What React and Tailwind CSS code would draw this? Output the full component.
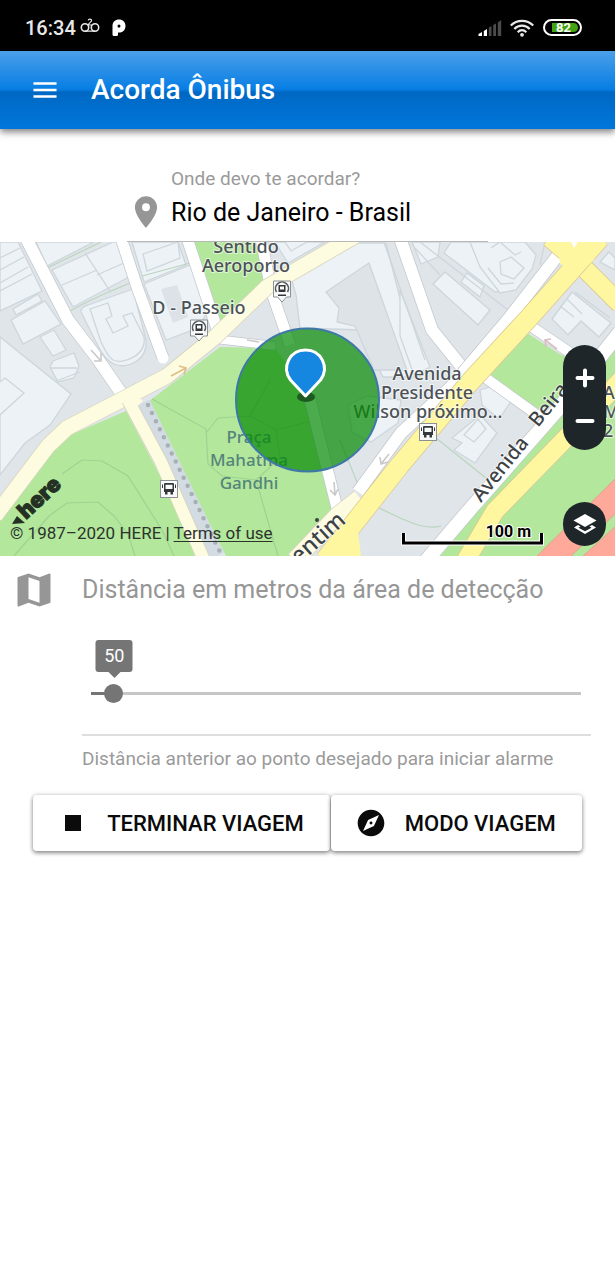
import { useState } from "react";
import { MdMenu, MdLocationOn, MdMap, MdStop, MdExplore } from "react-icons/md";

const MIN = 0;
const MAX = 1050;

function StatusBar() {
  return (
    <div className="flex h-[51px] items-center justify-between bg-black pl-[25px] pr-[33px] pt-1 text-[#e8e8e8]">
      <div className="flex items-center">
        <span className="text-[20px] font-medium leading-6">16:34</span>
        <svg className="ml-1 h-5 w-5" viewBox="0 0 20 20" fill="none" stroke="currentColor" strokeWidth="1.6">
          <circle cx="5" cy="9.500" r="3.700" />
          <circle cx="15" cy="9.500" r="3.700" />
          <path d="M5 13.200H15M8.200 2.400C8.400.6 11.600.6 11.600 2.500C11.600 4 8.800 4.800 8.300 7H12" strokeWidth="1.200" />
        </svg>
        <svg className="ml-3 h-[18px] w-[14px]" viewBox="0 0 14 18" fill="white">
          <path fillRule="evenodd" d="M.5 7C.5 3 3.200.6 7 .6S13.500 3.200 13.500 7 11 13.500 7.200 13.500H6V15.500Q6 17 4.500 17H2Q.5 17 .5 15.500ZM7 5.400A1.500 1.700 0 1 0 7 8.800A1.500 1.700 0 0 0 7 5.400Z" />
        </svg>
      </div>
      <div className="flex items-center">
        <svg className="h-[18px] w-6" viewBox="0 0 24 18">
          <path d="M.5 17V15L4 13V17ZM5.800 17V12L9 10V17Z" fill="#fff" />
          <path d="M10.800 17V8.500L13.500 7V17ZM15.200 17V6L18 4.500V17ZM19.800 17V3.500L23.200 1V17Z" fill="#4b4b4b" />
        </svg>
        <svg className="ml-2 h-[18px] w-6" viewBox="0 0 24 18" fill="none" stroke="currentColor" strokeWidth="2.200">
          <path d="M.8 6.500C7 .2 17 .2 23.200 6.500M4.300 10C8.500 5.600 15.500 5.600 19.700 10M7.700 13.200C10.200 10.500 13.800 10.500 16.300 13.200" />
          <circle cx="12" cy="15.800" r="1.900" fill="currentColor" stroke="none" />
        </svg>
        <span className="ml-[9px] flex h-[17px] w-[39px] rounded-full border-2 border-white p-[2px]">
          <span className="ml-[5px] flex w-[26px] items-center rounded-r-full bg-[#43a312] pl-1 text-[13px] font-bold leading-none text-white">
            82
          </span>
        </span>
      </div>
    </div>
  );
}

function Road({ d, width, fill = "#ffffff", edge = "#c3c8cc" }) {
  return (
    <>
      <path d={d} fill="none" stroke={edge} strokeWidth={width + 1.500} strokeLinejoin="round" />
      <path d={d} fill="none" stroke={fill} strokeWidth={width} strokeLinejoin="round" />
    </>
  );
}

function BusStop({ x, y }) {
  return (
    <g transform={`translate(${x} ${y})`}>
      <rect x="-8.500" y="-8.500" width="17" height="17" fill="#f8fafa" stroke="#8c9194" />
      <path fillRule="evenodd" fill="#33393b" d="M-4-6H4Q5-6 5-5V3H4V5.500H1.500V3H-1.500V5.500H-4V3H-5V-5Q-5-6-4-6ZM-3.500-4.200V0H3.500V-4.200ZM-7-4.500H-6V-1H-7ZM6-4.500H7V-1H6Z" />
    </g>
  );
}

function MetroStop({ x, y }) {
  return (
    <g transform={`translate(${x} ${y})`}>
      <path d="M-8.500-9H8.500V7H4.500L0 12L-4.500 7H-8.500Z" fill="#f8fafa" stroke="#8c9194" />
      <path d="M-5.500 2A6.500 6.500 0 1 1 5.500 2" fill="none" stroke="#555b5e" strokeWidth="1.600" />
      <path fillRule="evenodd" fill="#33393b" d="M-3.500-5H3.500V2H-3.500ZM-2-3.500V-.5H2V-3.500ZM-4 4.500H4V6H-4Z" />
    </g>
  );
}

function CityMap() {
  const block = { fill: "#ecf2f5", stroke: "#ced6dc", strokeWidth: 1.300 };
  const line = { fill: "none", stroke: "#ced6dc", strokeWidth: 1.300 };
  const path = { fill: "none", stroke: "#9ed292", strokeWidth: 1.200 };
  return (
    <svg className="h-full w-full" viewBox="0 242 615 314" preserveAspectRatio="xMidYMid slice">
      <rect y="242" width="615" height="314" fill="#e0e5ea" />

      <g {...block}>
        <path d="M0 242H18L42 291L0 311Z" />
        <path d="M0 258L20 248M0 270L24 257M0 283L28 267M0 291L32 274" />
        <path d="M11 320L45 301L61 324L23 344ZM13 309L38 294L42 301L16 315Z" />
        <path d="M40 337L54 330L66 350L53 356ZM53 361L74 353L79 366L74 378L58 382L50 367Z" />
        <path d="M51 368H77M56 381L80 372" />
        <path d="M0 337L71 394L50 425L25 443L0 475Z" />
        <path d="M-5 386L5 378L24 393L0 415" />
        <path d="M36 242H94L47 266ZM52 270L113 242H122L129 277L73 307Z" />
        <path d="M85 253L110 291M62 285L97 270M97 275L124 263" />
        <path d="M132 242H178L186 265L144 282Z" />
        <path d="M143 254L178 242L180 258L147 271Z" />
        <path d="M81 312C80 309 84 306 88 305L133 289L146 340C148 360 127 370 114 364C105 360 100 350 96 342Z" />
        <path d="M90 309L108 303L112 316L106 319L113 333L128 326L123 316L132 313L144 337C147 355 123 365 113 360C107 356 104 348 101 342Z" />
        <path d="M144 284L190 265L211 306L198 328L166 340Z" />
        <path d="M161 289L177 285L188 317L173 323Z" fill="#dce2e7" stroke="none" />
        <path d="M275 242H325L288 263L281 252Z" />
        <path d="M285 242L291 251L307 242" />
        <path d="M292 281L357 243H386L420 377H383L361 330L300 328L296 295Z" />
        <path d="M326 292L369 263L407 370H374L355 326L337 322L339 308Z" fill="#dee3e8" />
        <path d="M400 290L430 367L414 375L400 336Z" />
        <path d="M412 242H440L438 257L421 264Z" />
        <path d="M433 284L445 272L490 310L478 325ZM461 282L467 273L484 286L480 297Z" />
        <path d="M444 253L451 242H475L510 290L495 292Z" />
        <path d="M470 242L480 267L500 293L516 290L532 269L536 255L525 242Z" />
        <path d="M500 262L511 257L524 268L514 279L501 274ZM491 248L500 242L515 255L521 252M488 268L501 284L514 283" />
        <path d="M552 319L572 292L611 323L599 337L581 321L568 335Z" />
        <path d="M560 306L574 317M567 299L582 314M575 292L610 318" />
        <path d="M600 262L609 252L615 258V270Z" />
        <path d="M452 438L462 443L454 450L475 463L497 433L480 415Z" />
        <path d="M464 435L478 419L486 429L474 442ZM480 390L493 386L512 400L499 419L482 405Z" />
        <path d="M348 405L367 396L401 400L398 423L371 442L352 432Z" />
      </g>
      <g {...line}>
        <path d="M420 242L508 310M415 248L440 275M384 242L425 360M545 242L540 265" />
      </g>
      <g {...path} stroke="#bad5be">
        <path d="M45 269L101 242M70 311C100 294 115 290 132 282M142 276L190 263M377 507L400 518C412 523 427 530 441 526M431 434L486 478M340 440L359 487" />
      </g>

      <g fill="#b3e89c">
        <path d="M193 242H257L267 280L219 330Z" />
        <path d="M0 520L50 454L68 436L126 411L202 556H0Z" />
        <path d="M148 402L220 347L275 348L309 395L328 470L337 510L292 556H226Z" />
        <path d="M527 333L572 362L556 408L531 409L490 374Z" />
        <path d="M567 406L615 342V556H430L475 505Z" />
        <path d="M528 388L563 355L590 372L560 412Z" />
      </g>

      <g {...path}>
        <path d="M62 474L82 460L102 461L128 476L162 530L174 556M14 556L49 516L67 503L98 502L114 516L128 534L135 556" />
        <path d="M152 399L206 429L208 464L222 476L256 480L280 458L276 430L250 416L218 418L206 433M256 480L278 556M250 416L270 380M276 430L315 420" />
      </g>

      <path d="M143 403L217 556" fill="none" stroke="#d3dbe3" strokeWidth="15" />
      <path d="M148 405L224 560" fill="none" stroke="#a7b1b3" strokeWidth="4.500" strokeLinecap="round" strokeDasharray="0 9" />

      <Road d="M26 238L68 320L97 358L126 400" width={12} />
      <Road d="M121 238L137 287L163 358" width={11} />
      <circle cx="163" cy="358" r="5.500" fill="#fff" />
      <Road d="M187 238L218 332" width={11} />
      <Road d="M261 238L271 290L290 345" width={11} />
      <Road d="M215 339L275 346" width={8} />
      <Road d="M309 395L320 440L337 508" width={11} />
      <Road d="M400 238L432 330L465 371" width={12} />
      <Road d="M562 250L510 317L450 388L401 433L358 492" width={12} />
      <Road d="M529 325L575 356" width={10} />
      <Road d="M480 374L540 417" width={10} />
      <Road d="M620 332L560 407L472 507L425 562" width={14} />

      <Road d="M355 236L267 287L215 337L167 376L125 398L67 428L48 446L-5 516" width={15} fill="#fefce0" edge="#d5d3bd" />
      <Road d="M128 400L161 462L204 560" width={12} fill="#fefce0" edge="#d5d3bd" />
      <path d="M122 397L134 392L143 401L133 410Z" fill="#fefce0" />
      <Road d="M360 498L337 516L295 560" width={17} fill="#fefce0" edge="#d5d3bd" />
      <Road d="M640 360L568 436L495 511L466 560" width={18} fill="#fff7a0" edge="#dbc794" />
      <Road d="M550 238L580 264L620 304" width={18} fill="#fff7a0" edge="#dbc794" />
      <Road d="M600 238L527 320L470 382L400 465L325 560" width={19} fill="#fff7a0" edge="#dbc794" />
      <path d="M556 242H590L594 260L575 277L560 263Z" fill="#fff7a0" />
      <path d="M352 524L358 531L361 557H325Z" fill="#fff7a0" />
      <path d="M571 242H578L574 248Z" fill="#fff" />

      <g fill="#ffa99b" stroke="#dfa28e">
        <path d="M616 478L536 557H570L616 513Z" />
        <path d="M616 526L582 557H616Z" />
      </g>

      <g fill="none" stroke="#dfbd86" strokeWidth="1.600">
        <path d="M171 376L186 368M179 366L186 368L184 374" />
        <g stroke="#c9c9c9">
          <path d="M91 350L101 361M94 361H101V353M247 340L259 342M334 482L335 495M330 490L335 495L338 489M389 454L381 464M380 457L381 464L388 462" />
        </g>
        <path d="M557 349L545 340M546 347L545 340L551 339" stroke="#d7bfc3" />
      </g>

      <MetroStop x={282} y={290} />
      <MetroStop x={199} y={329} />
      <BusStop x={169} y={489} />
      <BusStop x={428} y={432} />

      <g
        fontFamily="'Noto Sans', sans-serif"
        fontSize="18"
        fontWeight="500"
        fill="#4c5256"
        stroke="#ffffff"
        strokeOpacity="0.6"
        strokeWidth="2"
        paintOrder="stroke"
        textAnchor="middle"
      >
        <text x="246" y="253">Sentido</text>
        <text x="246" y="272">Aeroporto</text>
        <text x="199" y="314">D - Passeio</text>
        <text x="427" y="380">Avenida</text>
        <text x="427" y="399">Presidente</text>
        <text x="428" y="418">Wilson próximo...</text>
        <g textAnchor="start">
          <text x="603" y="399">Av</text>
          <text x="603" y="418">M</text>
          <text x="603" y="437">2</text>
        </g>
        <g fill="#55847b" stroke="none" fontSize="17">
          <text x="249" y="443">Praça</text>
          <text x="249" y="466">Mahatma</text>
          <text x="249" y="489">Gandhi</text>
        </g>
        <g fill="#3d4245" textAnchor="start" fontSize="20">
          <text transform="translate(481 503) rotate(-51)">Avenida</text>
          <text transform="translate(538 428) rotate(-51)">Beira</text>
          <text transform="translate(299 565) rotate(-42)" fontSize="23">entim</text>
        </g>
        <circle cx="317" cy="520" r="2" fill="#3d4245" stroke="none" />
      </g>

      <circle cx="307.500" cy="400" r="71.500" fill="#078a07" fillOpacity="0.720" stroke="#3f78a8" strokeWidth="2" />
      <ellipse cx="306" cy="397" rx="9" ry="5" fill="#1c5a20" />
      <path d="M305.500 396L290.500 380C281 367 290 350 305.500 350S330 367 320.500 380Z" fill="#1587e0" stroke="#fff" strokeWidth="3" strokeLinejoin="round" />

      <path d="M17 516L25 523L12 524Z" fill="#253024" />
      <text
        transform="translate(26 520) rotate(-43)"
        fontFamily="Inter, sans-serif"
        fontSize="22"
        fontWeight="900"
        fill="#253024"
        stroke="#253024"
        strokeWidth="1"
      >
        here
      </text>

      <g fill="none">
        <path d="M403.500 533V543H541.500V533" stroke="#fff" strokeWidth="5" />
        <path d="M403.500 533V543H541.500V533" stroke="#000" strokeWidth="3" />
      </g>
      <text
        x="531"
        y="537"
        textAnchor="end"
        fontFamily="Roboto, sans-serif"
        fontSize="16"
        fontWeight="700"
        stroke="#fff"
        strokeWidth="2"
        paintOrder="stroke"
      >
        100 m
      </text>
    </svg>
  );
}

function MapPanel() {
  return (
    <section aria-label="Mapa" className="relative h-[314px] overflow-hidden">
      <CityMap />
      <p className="absolute bottom-[13px] left-[10px] text-[17px] leading-5 text-[#2c332c]">
        © 1987–2020 HERE |{" "}
        <a href="#terms" className="underline underline-offset-2">
          Terms of use
        </a>
      </p>
      <div className="absolute right-[9px] top-[103px] flex h-[105px] w-[43px] flex-col overflow-hidden rounded-full bg-[#1f262a] text-white">
        <button type="button" aria-label="Aumentar zoom" className="flex flex-1 items-center justify-center pt-3">
          <svg className="h-5 w-5" viewBox="0 0 20 20" stroke="currentColor" strokeWidth="4" strokeLinecap="round">
            <path d="M10 2.500V17.500M2.500 10H17.500" />
          </svg>
        </button>
        <button type="button" aria-label="Diminuir zoom" className="flex flex-1 items-center justify-center pb-2">
          <svg className="h-5 w-5" viewBox="0 0 20 20" stroke="currentColor" strokeWidth="4" strokeLinecap="round">
            <path d="M2.500 10H17.500" />
          </svg>
        </button>
      </div>
      <button
        type="button"
        aria-label="Camadas"
        className="absolute bottom-[10px] right-[9px] flex h-11 w-[43px] items-center justify-center rounded-full bg-[#1f262a] text-white"
      >
        <svg className="h-6 w-6" viewBox="0 0 24 24" fill="currentColor">
          <path d="M12 2L23.500 8.500L12 15L.5 8.500Z" />
          <path d="M5 13L1 15.500L12 22L23 15.500L19 13L16.500 14.500L18.500 15.700L12 19.200L5.500 15.700L7.500 14.500Z" />
        </svg>
      </button>
    </section>
  );
}

function DistanceSlider() {
  const [value, setValue] = useState(50);
  const percent = ((value - MIN) / (MAX - MIN)) * 100;
  return (
    <div className="relative ml-[9px] mr-[10px]">
      <output
        htmlFor="distance"
        className="absolute top-[3px] flex h-8 min-w-[37px] -translate-x-1/2 items-center justify-center rounded-[3px] bg-[#757575] px-2 text-[18px] leading-none text-white after:absolute after:top-full after:h-0 after:w-0 after:border-x-[6px] after:border-t-[6px] after:border-x-transparent after:border-t-[#757575]"
        style={{ left: `${percent}%` }}
      >
        {value}
      </output>
      <div className="pt-[46px]">
        <div
          className="flex h-5 items-center bg-[length:100%_3px] bg-center bg-no-repeat"
          style={{
            backgroundImage: `linear-gradient(to right, #757575 ${percent}%, #c6c6c6 ${percent}%)`,
          }}
        >
          <input
            id="distance"
            type="range"
            min={MIN}
            max={MAX}
            step="10"
            value={value}
            onChange={(e) => setValue(Number(e.target.value))}
            className="-mx-[10px] h-5 flex-1 cursor-pointer appearance-none bg-transparent outline-none [&::-webkit-slider-thumb]:h-[19px] [&::-webkit-slider-thumb]:w-[19px] [&::-webkit-slider-thumb]:appearance-none [&::-webkit-slider-thumb]:rounded-full [&::-webkit-slider-thumb]:bg-[#757575]"
          />
        </div>
      </div>
    </div>
  );
}

function ActionButton({ icon, children }) {
  return (
    <button
      type="button"
      className="flex h-14 items-center gap-[18px] whitespace-nowrap rounded-[4px] bg-white pl-6 pr-[26px] text-[22px] font-medium text-[#0b0b0b] shadow-[0_2px_4px_rgba(0,0,0,0.42),0_0_5px_rgba(0,0,0,0.16)]"
    >
      {icon}
      {children}
    </button>
  );
}

export default function App() {
  return (
    <div className="min-h-screen bg-white font-[Roboto,sans-serif] text-black">
      <StatusBar />
      <header className="relative flex h-[78px] items-center bg-linear-[to_bottom,#4b9fe9_0%,#077ee4_49%,#0068c3_53%,#0077dc_100%] pl-[31px] text-white shadow-[0_3px_7px_rgba(0,0,0,0.5)]">
        <button type="button" aria-label="Abrir menu">
          <MdMenu className="h-7 w-7 scale-110" />
        </button>
        <h1 className="ml-8 text-[28px] font-medium leading-8">Acorda Ônibus</h1>
      </header>

      <main>
        <div className="mx-auto mt-9 flex w-[361px] max-w-full items-end border-b border-[#b8b8b8]">
          <MdLocationOn className="mb-[10px] h-[38px] w-[38px] shrink-0 text-[#969696]" />
          <div className="ml-[6px] min-w-0 flex-1">
            <label htmlFor="destination" className="block text-[19px] leading-7 text-[#9a9a9a]">
              Onde devo te acordar?
            </label>
            <input
              id="destination"
              type="text"
              defaultValue="Rio de Janeiro - Brasil"
              className="mb-[10px] block h-[38px] w-full bg-transparent text-[25px] outline-none"
            />
          </div>
        </div>

        <MapPanel />

        <div className="flex items-start gap-[26px] pl-3 pr-6">
          <MdMap className="mt-3 h-11 w-11 shrink-0 text-[#969696]" />
          <div className="min-w-0 flex-1">
            <label htmlFor="distance" className="mt-[18px] block text-[25px] leading-8 text-[#969696]">
              Distância em metros da área de detecção
            </label>
            <div className="mt-[31px] border-b-2 border-[#dedede] pb-[31px]">
              <DistanceSlider />
            </div>
            <p className="mt-[11px] text-[19px] leading-6 text-[#9a9a9a]">
              Distância anterior ao ponto desejado para iniciar alarme
            </p>
          </div>
        </div>

        <div className="mt-6 flex justify-center gap-px">
          <ActionButton icon={<MdStop className="h-8 w-8" />}>TERMINAR VIAGEM</ActionButton>
          <ActionButton icon={<MdExplore className="h-8 w-8" />}>MODO VIAGEM</ActionButton>
        </div>
      </main>
    </div>
  );
}
